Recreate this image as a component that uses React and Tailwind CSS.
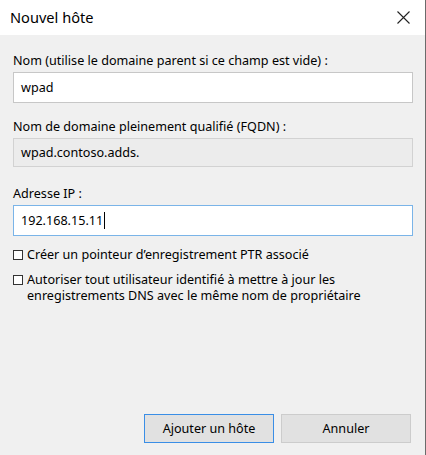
export default function App() {
  return (
    <div
      className="w-[426px] h-[455px] flex flex-col bg-[#f0f0f0] border-r border-[#6b6b6b] text-black text-[12.6px] leading-[17px]"
      style={{ fontFamily: '"Segoe UI", "Noto Sans", sans-serif' }}
    >
      {/* Title bar */}
      <div className="h-[35px] bg-white flex items-center justify-between pl-[10px] pr-[15px]">
        <span className="text-[14.6px]">Nouvel hôte</span>
        <svg width="13" height="13" viewBox="0 0 13 13" className="text-[#222]">
          <path d="M0.5 0.5 L12.5 12.5 M12.5 0.5 L0.5 12.5" stroke="currentColor" strokeWidth="1.1" />
        </svg>
      </div>

      {/* Form */}
      <div className="flex flex-col px-[13px]">
        <label className="mt-[17px]">Nom (utilise le domaine parent si ce champ est vide) :</label>
        <div className="mt-[3px] h-[31px] w-[400px] bg-white border border-[#c7c7c7] flex items-center pl-[7px]">
          wpad
        </div>

        <label className="mt-[15px]">Nom de domaine pleinement qualifié (FQDN) :</label>
        <div className="mt-[3px] h-[29px] w-[400px] bg-[#ececec] border border-[#d2d2d2] flex items-center pl-[7px]">
          wpad.contoso.adds.
        </div>

        <label className="mt-[18px]">Adresse IP :</label>
        <div className="mt-[3px] h-[31px] w-[400px] bg-white border border-[#7ab4e8] flex items-center pl-[7px]">
          <span>192.168.15.11</span>
          <span className="w-[1px] h-[17px] bg-black ml-[1px]" />
        </div>

        <label className="mt-[11px] flex items-start gap-[4px] leading-[16px]">
          <span className="mt-[3px] w-[10px] h-[10px] border border-[#333] bg-white shrink-0" />
          <span>Créer un pointeur d’enregistrement PTR associé</span>
        </label>

        <label className="mt-[9px] flex items-start gap-[4px] leading-[16px]">
          <span className="mt-[3px] w-[10px] h-[10px] border border-[#333] bg-white shrink-0" />
          <span>
            Autoriser tout utilisateur identifié à mettre à jour les
            <br />
            enregistrements DNS avec le même nom de propriétaire
          </span>
        </label>
      </div>

      {/* Buttons */}
      <div className="mt-auto mb-[12px] flex justify-end gap-[7px] pr-[14px]">
        <button className="w-[130px] h-[29px] bg-[#e1e1e1] border border-[#3a8ee6]">Ajouter un hôte</button>
        <button className="w-[130px] h-[29px] bg-[#e1e1e1] border border-[#cccccc]">Annuler</button>
      </div>
    </div>
  );
}
